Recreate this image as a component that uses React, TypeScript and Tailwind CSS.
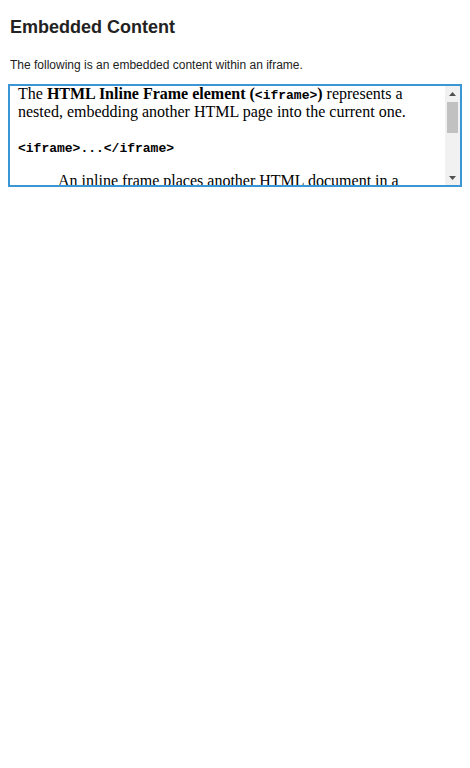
import React from "react";

export default function App() {
  return (
    <div className="min-h-[768px] w-[470px] bg-white text-[#222]" style={{ fontFamily: '"Liberation Sans", Arial, sans-serif' }}>
      <div className="pt-[16px]">
        <h1 className="ml-[10px] text-[18px] font-bold leading-[22px] text-[#222]">Embedded Content</h1>
        <p className="ml-[10px] mt-[20px] text-[12px] leading-[14px] text-[#222]">
          The following is an embedded content within an iframe.
        </p>
        <div className="mx-[8px] mt-[12px] h-[103px] border-2 border-[#3a96d4] flex">
          <div
            className="flex-1 overflow-hidden pl-[8px] pr-[8px] text-[16px] text-black"
            style={{ fontFamily: '"Liberation Serif", "Times New Roman", serif' }}
          >
            <p className="-mt-[1px] leading-[18.4px]">
              The{" "}
              <strong>
                HTML Inline Frame element (
                <code className="text-[13px] leading-[13px]" style={{ fontFamily: '"Liberation Mono", "Courier New", monospace' }}>
                  &lt;iframe&gt;
                </code>
                )
              </strong>{" "}
              represents a nested, embedding another HTML page into the current one.
            </p>
            <pre
              className="mt-[19px] text-[13px] leading-[15px] font-bold"
              style={{ fontFamily: '"Liberation Mono", "Courier New", monospace' }}
            >
              &lt;iframe&gt;...&lt;/iframe&gt;
            </pre>
            <p className="mt-[16px] ml-[40px] leading-[18.4px]">
              An inline frame places another HTML document in a frame. Unlike an &lt;object&gt; element, an inline
              frame can be the "target" frame for links defined by other elements.
            </p>
          </div>
          <div className="w-[15px] bg-[#f1f1f1] flex flex-col items-center">
            <div className="h-[15px] flex items-center justify-center">
              <svg width="7" height="4" viewBox="0 0 7 4">
                <polygon points="3.5,0 7,4 0,4" fill="#505050" />
              </svg>
            </div>
            <div className="mt-[1px] w-[11px] h-[31px] bg-[#c1c1c1]" />
            <div className="flex-1" />
            <div className="h-[15px] flex items-center justify-center">
              <svg width="7" height="4" viewBox="0 0 7 4">
                <polygon points="0,0 7,0 3.5,4" fill="#505050" />
              </svg>
            </div>
          </div>
        </div>
      </div>
    </div>
  );
}
